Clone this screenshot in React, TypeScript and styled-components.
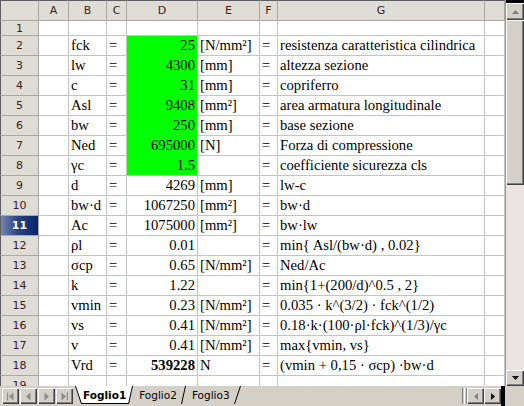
import React from "react";
import styled, { createGlobalStyle, css } from "styled-components";

const Global = createGlobalStyle`
  html, body { margin: 0; padding: 0; background: #fff; overflow: hidden; }
  * { box-sizing: border-box; }
`;

const HEAD_BG = "#dedcd5";
const HEAD_LINE = "#a9a79f";
const GRID = "#c4c4c4";
const FRAME = "#5e5e5e";

const Window = styled.div`
  width: 524px;
  height: 406px;
  display: flex;
  flex-direction: column;
  overflow: hidden;
  background: #d4d0c8;
`;

const Main = styled.div`
  display: flex;
  height: 386px;
`;

const Sheet = styled.div`
  flex: 1;
  min-width: 0;
  overflow: hidden;
  display: grid;
  grid-template-columns: 39px 30px 38px 20px 71px 62px 18px 207px 20px;
  grid-template-rows: 21px 15px repeat(18, 20px);
  align-content: start;
  background: #fff;
`;

const headFont = css`
  font-family: "DejaVu Sans", "Liberation Sans", sans-serif;
  font-size: 11px;
  color: #3a1c1c;
  display: flex;
  align-items: center;
  justify-content: center;
  background: ${HEAD_BG};
`;

const Corner = styled.div`
  ${headFont};
  border-top: 1px solid ${FRAME};
  border-left: 1px solid ${FRAME};
  border-right: 1px solid ${HEAD_LINE};
  border-bottom: 1px solid ${HEAD_LINE};
`;

const ColHead = styled.div`
  ${headFont};
  border-top: 1px solid ${FRAME};
  border-right: 1px solid ${HEAD_LINE};
  border-bottom: 1px solid ${HEAD_LINE};
`;

const RowHead = styled.div<{ $selected?: boolean }>`
  ${headFont};
  border-left: 1px solid ${FRAME};
  border-right: 1px solid ${HEAD_LINE};
  border-bottom: 1px solid ${HEAD_LINE};
  ${(p) =>
    p.$selected &&
    css`
      background: linear-gradient(to right, #7486b6 0%, #2a4480 45%, #0a246a 100%);
      color: #fff;
      font-weight: bold;
    `}
`;

const Cell = styled.div<{ $right?: boolean; $green?: boolean; $greenBelow?: boolean; $bold?: boolean }>`
  font-family: "Liberation Serif", "Times New Roman", serif;
  font-size: 14.67px;
  line-height: 19px;
  color: #000;
  white-space: nowrap;
  overflow: visible;
  padding: 0 2px;
  text-align: ${(p) => (p.$right ? "right" : "left")};
  font-weight: ${(p) => (p.$bold ? "bold" : "normal")};
  background: ${(p) => (p.$green ? "#00ff00" : "transparent")};
  border-right: 1px solid ${GRID};
  border-bottom: 1px solid ${(p) => (p.$greenBelow ? "#00ff00" : GRID)};
`;

/* ---------- vertical scrollbar ---------- */
const bevel = css`
  background: #d4d0c8;
  box-shadow: inset 1px 1px #ffffff, inset -1px -1px #404040, inset -2px -2px #808080;
`;

const VScroll = styled.div`
  width: 19px;
  display: flex;
  flex-direction: column;
  background: #ebe3e3;
  border-left: 1px solid #9a9890;
`;

const SplitHandle = styled.div`
  height: 3px;
  background: #000;
`;

const ScrollBtn = styled.div<{ $h: number }>`
  ${bevel};
  height: ${(p) => p.$h}px;
  display: flex;
  align-items: center;
  justify-content: center;
`;

const Thumb = styled.div`
  ${bevel};
  height: 165px;
`;

const Track = styled.div`
  flex: 1;
`;

/* ---------- bottom bar ---------- */
const Bottom = styled.div`
  height: 20px;
  display: flex;
  background: #d4d0c8;
`;

const Nav = styled.div`
  display: flex;
  gap: 1px;
  padding: 2px 0 2px 2px;
`;

const NavBtn = styled.div`
  ${bevel};
  width: 17px;
  height: 16px;
  display: flex;
  align-items: center;
  justify-content: center;
`;

const TabStrip = styled.div`
  display: flex;
  height: 18px;
  margin-left: 2px;
`;

const TabLabel = styled.div<{ $active?: boolean }>`
  font-family: "DejaVu Sans", "Liberation Sans", sans-serif;
  font-size: 10.5px;
  line-height: 18px;
  padding: ${(p) => (p.$active ? "0 2px 0 1px" : "0 4px 0 6px")};
  color: #000;
  font-weight: ${(p) => (p.$active ? "bold" : "normal")};
  background: ${(p) => (p.$active ? "#fff" : "transparent")};
  border-bottom: 1px solid ${(p) => (p.$active ? "#000" : "transparent")};
`;

const Spacer = styled.div`
  flex: 1;
`;

const HSplit = styled.div`
  width: 5px;
  margin: 2px 0;
  border-left: 1px solid #808080;
  border-right: 1px solid #808080;
  background: #fff;
  box-shadow: inset 1px 0 #d4d0c8, inset -1px 0 #d4d0c8;
`;

const HBtn = styled.div`
  ${bevel};
  width: 17px;
  height: 16px;
  margin-top: 2px;
  display: flex;
  align-items: center;
  justify-content: center;
`;

const BlackBar = styled.div`
  width: 4px;
  background: #000;
`;

const CornerBox = styled.div`
  width: 19px;
`;

/* ---------- icons ---------- */
const Tri = ({ dir, color }: { dir: "up" | "down" | "left" | "right"; color: string }) => {
  const pts: Record<string, string> = {
    up: "0,4 7,4 3.5,0",
    down: "0,0 7,0 3.5,4",
    left: "4,0 4,7 0,3.5",
    right: "0,0 0,7 4,3.5",
  };
  const vertical = dir === "up" || dir === "down";
  return (
    <svg width={vertical ? 7 : 4} height={vertical ? 4 : 7} viewBox={vertical ? "0 0 7 4" : "0 0 4 7"}>
      <polygon points={pts[dir]} fill={color} />
    </svg>
  );
};

const NavIcon = ({ kind }: { kind: "first" | "prev" | "next" | "last" }) => {
  const c = "#8a8a8a";
  return (
    <svg width="9" height="9" viewBox="0 0 9 9">
      {kind === "first" && (
        <>
          <rect x="1" y="0.5" width="1.2" height="8" fill={c} />
          <polygon points="7.5,0.5 7.5,8.5 3,4.5" fill={c} />
        </>
      )}
      {kind === "prev" && <polygon points="6.5,0.5 6.5,8.5 2,4.5" fill={c} />}
      {kind === "next" && <polygon points="2.5,0.5 2.5,8.5 7,4.5" fill={c} />}
      {kind === "last" && (
        <>
          <polygon points="1.5,0.5 1.5,8.5 6,4.5" fill={c} />
          <rect x="6.8" y="0.5" width="1.2" height="8" fill={c} />
        </>
      )}
    </svg>
  );
};

const Slant = ({ dir, fillSide, w: width }: { dir: "back" | "fwd"; fillSide?: "left" | "right"; w?: number }) => {
  const w = width ?? (dir === "back" ? 7 : 5);
  const h = 18;
  let fill: string | null = null;
  if (fillSide === "right") fill = `0,0 ${w},0 ${w},${h}`;
  if (fillSide === "left") fill = `0,0 ${w},0 0,${h}`;
  return (
    <svg width={w} height={h} viewBox={`0 0 ${w} ${h}`}>
      {fill && <polygon points={fill} fill="#fff" />}
      {dir === "back" ? (
        <line x1="0.5" y1="0" x2={w - 0.5} y2={h} stroke="#000" strokeWidth="1" />
      ) : (
        <line x1="0.5" y1={h} x2={w - 0.5} y2="0" stroke="#000" strokeWidth="1" />
      )}
    </svg>
  );
};

/* ---------- data ---------- */
type Row = { b?: string; d?: string; e?: string; g?: string; green?: boolean; bold?: boolean };

const rows: Row[] = [
  {},
  { b: "fck", d: "25", e: "[N/mm²]", g: "resistenza caratteristica cilindrica", green: true },
  { b: "lw", d: "4300", e: "[mm]", g: "altezza sezione", green: true },
  { b: "c", d: "31", e: "[mm]", g: "copriferro", green: true },
  { b: "Asl", d: "9408", e: "[mm²]", g: "area armatura longitudinale", green: true },
  { b: "bw", d: "250", e: "[mm]", g: "base sezione", green: true },
  { b: "Ned", d: "695000", e: "[N]", g: "Forza di compressione", green: true },
  { b: "γc", d: "1.5", e: "", g: "coefficiente sicurezza cls", green: true },
  { b: "d", d: "4269", e: "[mm]", g: "lw-c" },
  { b: "bw·d", d: "1067250", e: "[mm²]", g: "bw·d" },
  { b: "Ac", d: "1075000", e: "[mm²]", g: "bw·lw" },
  { b: "ρl", d: "0.01", e: "", g: "min{ Asl/(bw·d) , 0.02}" },
  { b: "σcp", d: "0.65", e: "[N/mm²]", g: "Ned/Ac" },
  { b: "k", d: "1.22", e: "", g: "min{1+(200/d)^0.5 , 2}" },
  { b: "vmin", d: "0.23", e: "[N/mm²]", g: "0.035 · k^(3/2) · fck^(1/2)" },
  { b: "vs", d: "0.41", e: "[N/mm²]", g: "0.18·k·(100·ρl·fck)^(1/3)/γc" },
  { b: "v", d: "0.41", e: "[N/mm²]", g: "max{vmin, vs}" },
  { b: "Vrd", d: "539228", e: "N", g: "(vmin + 0,15 · σcp) ·bw·d", bold: true },
  {},
];

const cols = ["A", "B", "C", "D", "E", "F", "G", ""];

export default function App() {
  return (
    <>
      <Global />
      <Window>
        <Main>
          <Sheet>
            <Corner />
            {cols.map((c, i) => (
              <ColHead key={i}>{c}</ColHead>
            ))}
            {rows.map((r, i) => {
              const n = i + 1;
              const next = rows[i + 1];
              const has = r.b !== undefined;
              return (
                <React.Fragment key={n}>
                  <RowHead $selected={n === 11}>{n}</RowHead>
                  <Cell />
                  <Cell>{r.b}</Cell>
                  <Cell>{has ? "=" : ""}</Cell>
                  <Cell $right $green={r.green} $greenBelow={r.green && next?.green} $bold={r.bold}>
                    {r.d}
                  </Cell>
                  <Cell>{r.e}</Cell>
                  <Cell>{has ? "=" : ""}</Cell>
                  <Cell>{r.g}</Cell>
                  <Cell />
                </React.Fragment>
              );
            })}
          </Sheet>
          <VScroll>
            <SplitHandle />
            <ScrollBtn $h={17}>
              <Tri dir="up" color="#808080" />
            </ScrollBtn>
            <Thumb />
            <Track />
            <ScrollBtn $h={16}>
              <Tri dir="down" color="#000" />
            </ScrollBtn>
          </VScroll>
        </Main>
        <Bottom>
          <Nav>
            <NavBtn>
              <NavIcon kind="first" />
            </NavBtn>
            <NavBtn>
              <NavIcon kind="prev" />
            </NavBtn>
            <NavBtn>
              <NavIcon kind="next" />
            </NavBtn>
            <NavBtn>
              <NavIcon kind="last" />
            </NavBtn>
          </Nav>
          <TabStrip>
            <Slant dir="back" fillSide="right" />
            <TabLabel $active>Foglio1</TabLabel>
            <Slant dir="fwd" fillSide="left" />
            <TabLabel>Foglio2</TabLabel>
            <Slant dir="fwd" />
            <TabLabel>Foglio3</TabLabel>
            <Slant dir="fwd" w={7} />
          </TabStrip>
          <Spacer />
          <HSplit />
          <HBtn>
            <Tri dir="left" color="#808080" />
          </HBtn>
          <HBtn>
            <Tri dir="right" color="#000" />
          </HBtn>
          <BlackBar />
          <CornerBox />
        </Bottom>
      </Window>
    </>
  );
}
